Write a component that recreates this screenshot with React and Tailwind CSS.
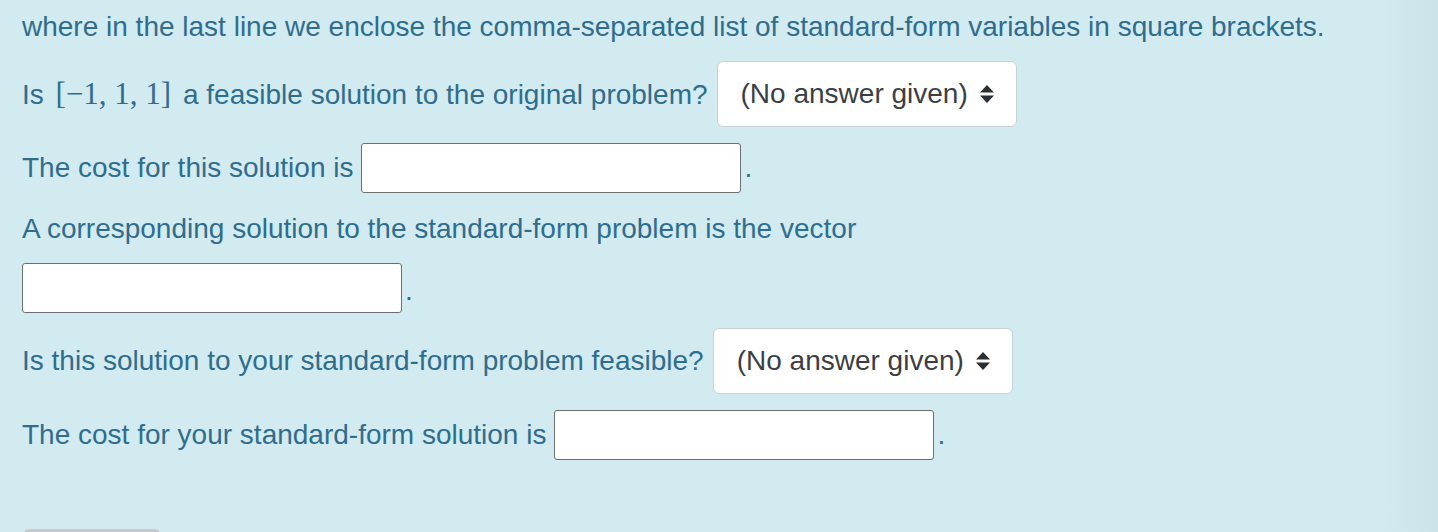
export default function App() {
  const sans = { fontFamily: '"Liberation Sans", Arial, Helvetica, sans-serif' };

  const Select = () => (
    <div className="flex items-center justify-between w-[300px] h-[66px] bg-white border border-[#c9d1d6] rounded-[6px] pl-[23px] pr-[21px] text-[28px] text-[#3b3f44]">
      <span>(No answer given)</span>
      <svg width="16" height="20" viewBox="0 0 16 20" className="shrink-0">
        <path d="M8 1 L15 8.5 L1 8.5 Z" fill="#2b2f33" />
        <path d="M1 11.5 L15 11.5 L8 19 Z" fill="#2b2f33" />
      </svg>
    </div>
  );

  const Input = ({ w = 'w-[380px]' }) => (
    <div className={`${w} h-[50px] bg-white border border-[#6f6f6f] rounded-[3px]`} />
  );

  return (
    <div
      className="h-[532px] overflow-hidden bg-[linear-gradient(to_right,#d1ebf0_96%,#cae4ea)] text-[#306d8d] text-[28px] leading-[36px] pl-[22px] pt-[9px]"
      style={sans}
    >
      <p>
        where in the last line we enclose the comma-separated list of standard-form variables in square brackets.
      </p>

      <div className="flex items-center mt-[16px]">
        <span>
          Is{' '}
          <span
            className="text-[31px] mx-[4px]"
            style={{ fontFamily: '"Liberation Serif", "Times New Roman", serif' }}
          >
            [−1, 1, 1]
          </span>{' '}
          a feasible solution to the original problem?
        </span>
        <div className="ml-[9px]">
          <Select />
        </div>
      </div>

      <div className="flex items-center mt-[16px]">
        <span>The cost for this solution is</span>
        <div className="ml-[8px]">
          <Input />
        </div>
        <span className="ml-[3px]">.</span>
      </div>

      <p className="mt-[18px]">A corresponding solution to the standard-form problem is the vector</p>

      <div className="flex items-center mt-[16px]">
        <Input />
        <span className="ml-[3px] mt-[6px]">.</span>
      </div>

      <div className="flex items-center mt-[15px]">
        <span>Is this solution to your standard-form problem feasible?</span>
        <div className="ml-[9px]">
          <Select />
        </div>
      </div>

      <div className="flex items-center mt-[16px]">
        <span>The cost for your standard-form solution is</span>
        <div className="ml-[8px]">
          <Input />
        </div>
        <span className="ml-[3px]">.</span>
      </div>

      <button className="mt-[69px] ml-[2px] w-[136px] h-[50px] bg-[#c9c9c9] rounded-[5px]" />
    </div>
  );
}
